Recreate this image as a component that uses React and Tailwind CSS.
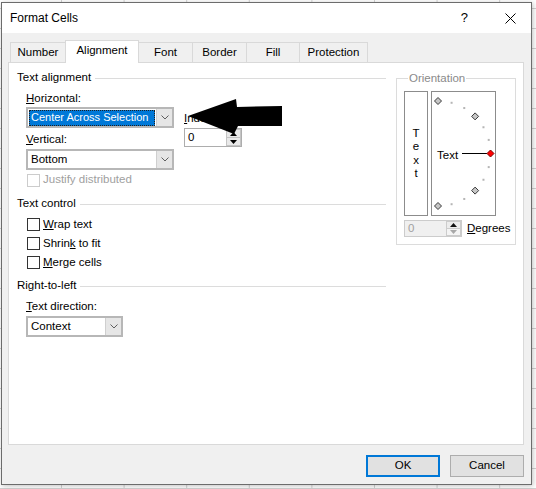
import React from "react";

const Chevron = () => (
    <svg width="8" height="5" viewBox="0 0 8 5">
        <path d="M0.5 0.5 L4 4 L7.5 0.5" fill="none" stroke="#5f5f5f" strokeWidth="1" />
    </svg>
)

const Tri = ({ up, color }) => (
    <svg width="7" height="4" viewBox="0 0 7 4">
        <polygon points={up ? "0,4 7,4 3.5,0" : "0,0 7,0 3.5,4"} fill={color} />
    </svg>
)

const Select = ({ width, value, highlight }) => (
    <div className={`flex h-[21px] border-2 border-[#b7b7b7] bg-white ${width}`}>
        <div className="flex flex-1 items-center px-[1px]">
            {highlight ? (
                <span className="flex h-[16px] w-full items-center whitespace-nowrap bg-[#0078d7] pl-[2px] text-[11px] text-white outline-1 outline-dotted outline-[#1f1f1f] -outline-offset-1">
                    {value}
                </span>
            ) : (
                <span className="pl-[2px]">{value}</span>
            )}
        </div>
        <div className="flex w-[16px] items-center justify-center border-l border-[#cfcfcf] bg-[#e6e6e6]">
            <Chevron />
        </div>
    </div>
)

const GroupHeader = ({ title, className = "" }) => (
    <div className={`flex h-[16px] items-center ${className}`}>
        <span className="whitespace-nowrap">{title}</span>
        <div className="ml-[4px] h-px flex-1 bg-[#dcdcdc]"></div>
    </div>
)

const Checkbox = ({ children, disabled, className = "" }) => (
    <div className={`flex items-center ${className}`}>
        <div className={`h-[13px] w-[13px] border bg-white ${disabled ? "border-[#cccccc]" : "border-[#333333]"}`}></div>
        <span className={`ml-[3px] whitespace-nowrap ${disabled ? "text-[#a0a0a0]" : ""}`}>{children}</span>
    </div>
)

const tabs = [
    { name: "Number", cls: "w-[55px] h-[20px] border-t border-l" },
    { name: "Alignment", cls: "w-[74px] h-[23px] -mb-px border-t border-l border-r bg-white relative z-10 pb-[2px]", active: true },
    { name: "Font", cls: "w-[53px] h-[20px] border-t" },
    { name: "Border", cls: "w-[54px] h-[20px] border-t border-l" },
    { name: "Fill", cls: "w-[53px] h-[20px] border-t border-l" },
    { name: "Protection", cls: "w-[69px] h-[20px] border-t border-l border-r" },
]

const C = [6, 61.5]
const R = 52.5
const pt = (deg) => [C[0] + R * Math.cos((deg * Math.PI) / 180), C[1] - R * Math.sin((deg * Math.PI) / 180)]
const dots = [75, 60, 30, 15, -15, -30, -60, -75].map(pt)
const diamonds = [90, 45, -45, -90].map(pt)

const Diamond = ({ x, y, fill, stroke }) => (
    <polygon points={`${x},${y - 3.5} ${x + 3.5},${y} ${x},${y + 3.5} ${x - 3.5},${y}`} fill={fill} stroke={stroke} strokeWidth="1" />
)

const App = () => {
    return (
        <div className="h-[489px] w-[536px] overflow-hidden bg-white bg-[linear-gradient(to_right,#d2d2d2_1px,transparent_1px),linear-gradient(to_bottom,#d2d2d2_1px,transparent_1px)] bg-[length:62.6px_20px] bg-[position:61px_8px] pl-[1px] pt-[2px] font-['Liberation_Sans',Arial,sans-serif] text-[11.5px] text-black">
            <div className="flex h-[483px] w-[531px] flex-col border border-[#6c6c6c] shadow-[1px_1px_5px_rgba(0,0,0,0.25)]">
                {/* title bar */}
                <div className="flex h-[30px] items-center bg-white pl-[8px] pr-[15px]">
                    <span className="text-[12px]">Format Cells</span>
                    <span className="ml-auto text-[13px]">?</span>
                    <svg className="ml-[37px]" width="11" height="11" viewBox="0 0 11 11">
                        <path d="M0.5 0.5 L10.5 10.5 M10.5 0.5 L0.5 10.5" stroke="#000" strokeWidth="1" />
                    </svg>
                </div>

                {/* body */}
                <div className="flex flex-1 flex-col bg-[#f0f0f0] pl-[6px]">
                    <div className="mt-[7px] flex h-[22px] items-end pl-[2px]">
                        {tabs.map((t) => (
                            <div key={t.name} className={`flex items-center justify-center border-[#d9d9d9] ${t.cls}`}>
                                {t.name}
                            </div>
                        ))}
                    </div>

                    <div className="relative h-[383px] w-[516px] border border-[#d9d9d9] bg-white">
                        <div className="flex pl-[8px] pt-[7px]">
                            {/* left column */}
                            <div className="w-[369px]">
                                <GroupHeader title="Text alignment" />
                                <div className="flex pl-[9px]">
                                    <div>
                                        <div className="mt-[4px] h-[16px] leading-[16px]"><u>H</u>orizontal:</div>
                                        <div className="mt-[1px]">
                                            <Select width="w-[148px]" value="Center Across Selection" highlight />
                                        </div>
                                        <div className="mt-[3px] h-[16px] leading-[16px]"><u>V</u>ertical:</div>
                                        <div className="mt-[2px]">
                                            <Select width="w-[148px]" value="Bottom" />
                                        </div>
                                        <Checkbox disabled className="mt-[2px] h-[16px] pl-[1px]">Justify distributed</Checkbox>
                                    </div>
                                    <div className="ml-[10px]">
                                        <div className="mt-[24px] h-[16px] leading-[16px]"><u>I</u>ndent:</div>
                                        <div className="mt-[2px] flex h-[19px] w-[58px] border border-[#adadad] bg-white">
                                            <div className="flex flex-1 items-center pl-[3px]">0</div>
                                            <div className="flex w-[15px] flex-col">
                                                <div className="flex flex-1 items-center justify-center border border-[#c4c4c4] bg-[#e9e9e9]">
                                                    <Tri up color="#000" />
                                                </div>
                                                <div className="flex flex-1 items-center justify-center border border-t-0 border-[#c4c4c4] bg-[#e9e9e9]">
                                                    <Tri color="#000" />
                                                </div>
                                            </div>
                                        </div>
                                    </div>
                                </div>

                                <GroupHeader className="mt-[8px]" title="Text control" />
                                <div className="mt-[3px] pl-[10px]">
                                    <Checkbox className="h-[19px]"><u>W</u>rap text</Checkbox>
                                    <Checkbox className="h-[19px]">Shrin<u>k</u> to fit</Checkbox>
                                    <Checkbox className="h-[19px]"><u>M</u>erge cells</Checkbox>
                                </div>

                                <GroupHeader className="mt-[6px]" title="Right-to-left" />
                                <div className="pl-[9px]">
                                    <div className="mt-[4px] h-[16px] leading-[16px]"><u>T</u>ext direction:</div>
                                    <div className="mt-[2px]">
                                        <Select width="w-[97px]" value="Context" />
                                    </div>
                                </div>
                            </div>

                            {/* orientation */}
                            <fieldset className="ml-[10px] h-[175px] w-[120px] border border-[#dcdcdc] pl-[7px] pt-[5px]">
                                <legend className="ml-[4px] px-[1px] leading-[16px] text-[#8a8a8a]">Orientation</legend>
                                <div className="flex gap-[3px]">
                                    <div className="flex h-[125px] w-[24px] flex-col items-center justify-center border border-[#8c8c8c] leading-[13.5px]">
                                        <span>T</span>
                                        <span>e</span>
                                        <span>x</span>
                                        <span>t</span>
                                    </div>
                                    <div className="h-[125px] w-[65px] border border-[#8c8c8c]">
                                        <svg width="63" height="123" viewBox="0 0 63 123" className="block">
                                            {dots.map(([x, y], i) => (
                                                <rect key={i} x={x - 1} y={y - 1} width="2" height="2" fill="#b5b5b5" />
                                            ))}
                                            {diamonds.map(([x, y], i) => (
                                                <Diamond key={i} x={x} y={y} fill="#c6c6c6" stroke="#3a3a3a" />
                                            ))}
                                            <line x1="30" y1="61.5" x2="55" y2="61.5" stroke="#000" strokeWidth="1" />
                                            <Diamond x={58.5} y={61.5} fill="#ff0000" stroke="#7a0000" />
                                            <text x="5" y="67" fontSize="11.5" fontFamily="Liberation Sans, Arial, sans-serif" fill="#000">Text</text>
                                        </svg>
                                    </div>
                                </div>
                                <div className="mt-[4px] flex items-center">
                                    <div className="flex h-[17px] w-[58px] border border-[#cccccc] bg-[#f0f0f0]">
                                        <div className="flex flex-1 items-center pl-[3px] text-[#a0a0a0]">0</div>
                                        <div className="flex w-[15px] flex-col bg-[#f7f7f7]">
                                            <div className="flex flex-1 items-center justify-center border border-[#cccccc] bg-[#ececec]">
                                                <Tri up color="#111" />
                                            </div>
                                            <div className="flex flex-1 items-center justify-center border border-t-0 border-[#cccccc] bg-[#f4f4f4]">
                                                <Tri color="#a8a8a8" />
                                            </div>
                                        </div>
                                    </div>
                                    <span className="ml-[5px]"><u>D</u>egrees</span>
                                </div>
                            </fieldset>
                        </div>

                        {/* annotation arrow */}
                        <svg className="pointer-events-none absolute left-0 top-0" width="300" height="100" viewBox="0 0 300 100">
                            <polygon points="179,53 227,36 228,44 273,43 273,63 229,63 225,71" fill="#000" />
                        </svg>
                    </div>

                    <div className="mt-[10px] flex w-[516px] justify-end gap-[10px]">
                        <button className="flex h-[22px] w-[74px] items-center justify-center border-2 border-[#0078d7] bg-[#e1e1e1]">OK</button>
                        <button className="flex h-[22px] w-[74px] items-center justify-center border border-[#adadad] bg-[#e1e1e1]">Cancel</button>
                    </div>
                </div>
            </div>
        </div>
    )
}

export default App
